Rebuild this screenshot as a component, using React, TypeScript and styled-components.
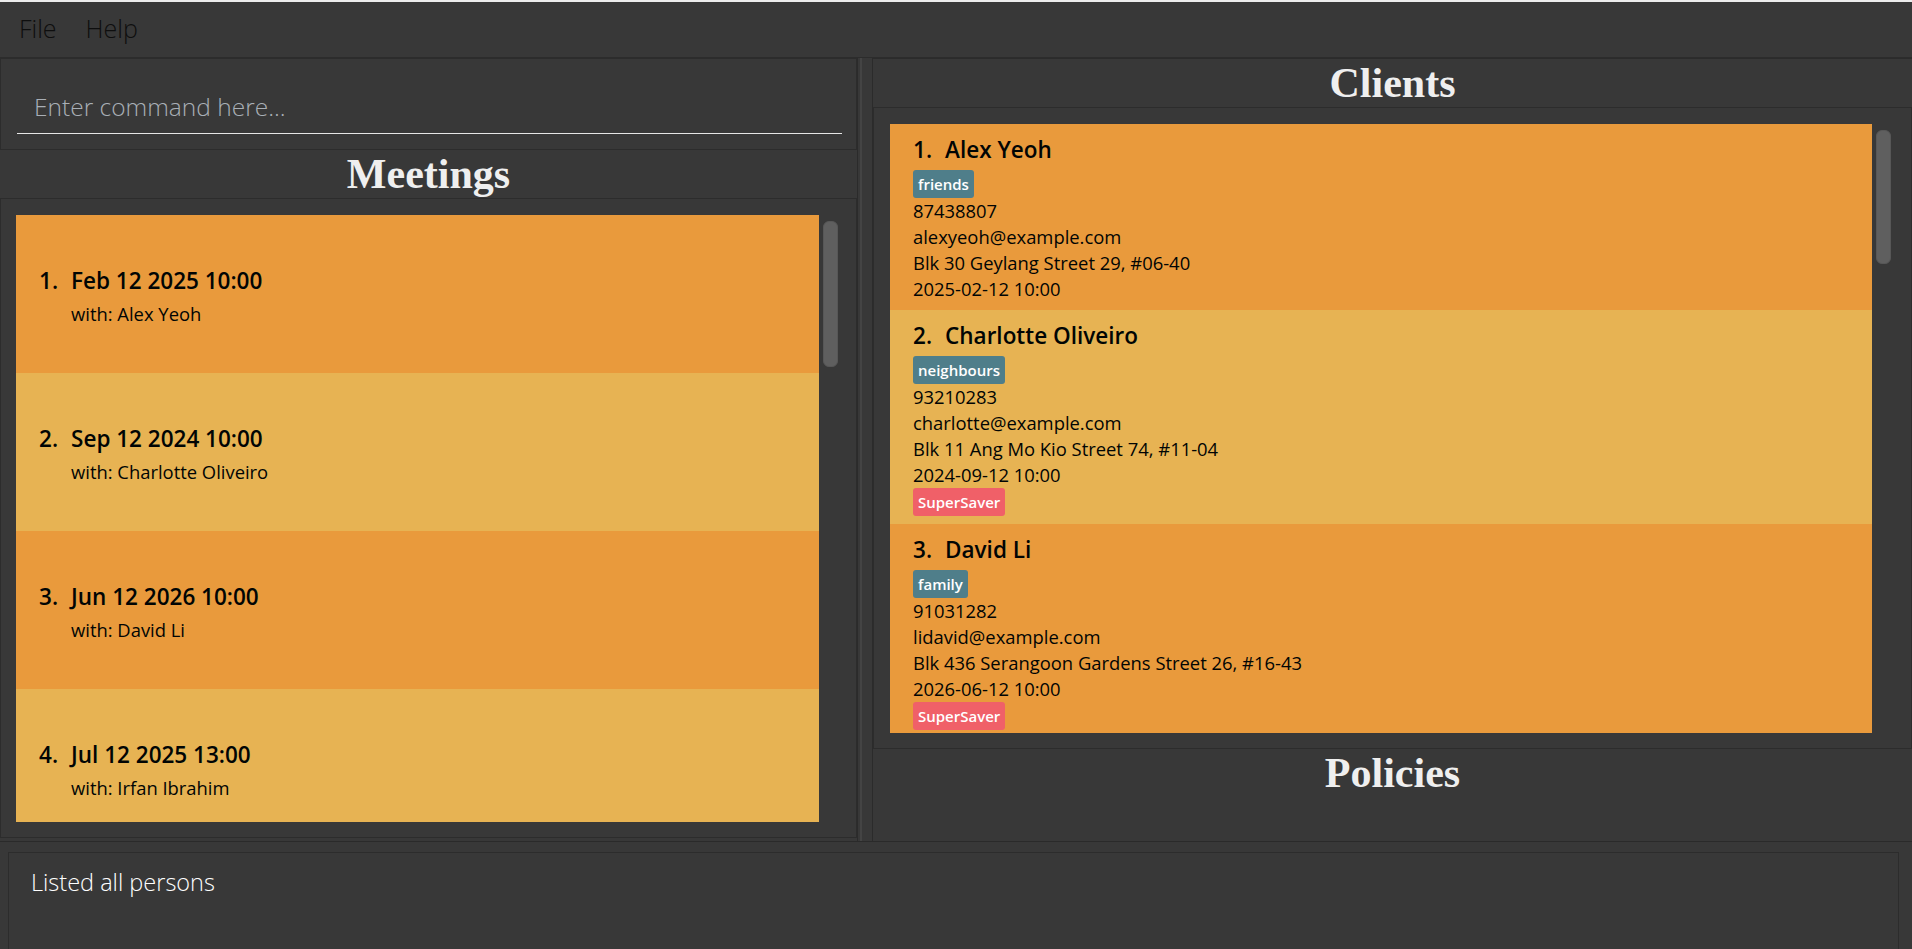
import React from "react";
import styled, { createGlobalStyle } from "styled-components";

const GlobalStyle = createGlobalStyle`
  html, body {
    margin: 0;
    padding: 0;
    background: #383838;
    overflow: hidden;
  }
  * { box-sizing: border-box; }
`;

const UI_FONT = `"Open Sans", "Noto Sans", "Liberation Sans", sans-serif`;

const Window = styled.div`
  width: 1912px;
  height: 949px;
  display: flex;
  flex-direction: column;
  background: #383838;
  border-top: 2px solid #ececec;
  overflow: hidden;
  font-family: ${UI_FONT};
`;

const MenuBar = styled.div`
  height: 56px;
  flex-shrink: 0;
  display: flex;
  align-items: flex-start;
  gap: 29px;
  padding: 10px 0 0 19px;
  border-bottom: 1px solid #2c2c2c;
`;

const MenuItem = styled.span`
  font-weight: 300;
  font-size: 25px;
  line-height: 32px;
  color: #0e0e0e;
`;

const Main = styled.div`
  height: 784px;
  flex-shrink: 0;
  display: flex;
  border-bottom: 1px solid #2a2a2a;
`;

const LeftPane = styled.div`
  width: 858px;
  flex-shrink: 0;
  display: flex;
  flex-direction: column;
  padding-bottom: 3px;
  border-right: 1px solid #2b2b2b;
`;

const Divider = styled.div`
  width: 14px;
  flex-shrink: 0;
  background: linear-gradient(
    to right,
    #383838 0,
    #383838 2px,
    #444444 2px,
    #444444 4px,
    #383838 4px
  );
`;

const RightPane = styled.div`
  flex: 1;
  display: flex;
  flex-direction: column;
  border-left: 1px solid #2b2b2b;
  border-top: 1px solid #2b2b2b;
`;

const CommandBox = styled.div`
  height: 92px;
  flex-shrink: 0;
  display: flex;
  align-items: flex-end;
  padding: 0 14px 15px 16px;
  border: 1px solid #2c2c2c;
`;

const CommandField = styled.input`
  width: 100%;
  height: 43px;
  margin: 0;
  padding: 0 0 12px 17px;
  background: transparent;
  border: none;
  border-bottom: 1px solid #e6e6e6;
  outline: none;
  font-family: ${UI_FONT};
  font-weight: 300;
  font-size: 24.5px;
  line-height: 30px;
  color: #ffffff;
  &::placeholder {
    color: #a9afb6;
  }
`;

const PanelTitle = styled.div`
  height: 48px;
  flex-shrink: 0;
  display: flex;
  justify-content: center;
  font-family: "Liberation Serif", "Times New Roman", serif;
  font-weight: 700;
  font-size: 42px;
  line-height: 48px;
  color: #efefef;
`;

const ListBox = styled.div<{ $fill?: boolean }>`
  ${(p) => (p.$fill ? "flex: 1;" : "height: 642px; flex-shrink: 0;")}
  min-height: 0;
  display: flex;
  gap: 4px;
  padding: 16px 19px 15px 16px;
  border: 1px solid #2c2c2c;
`;

const LeftListBox = styled(ListBox)`
  padding: 16px 17px 15px 15px;
`;

const Viewport = styled.div`
  flex: 1;
  min-width: 0;
  overflow: hidden;
  display: flex;
  flex-direction: column;
`;

const ScrollTrack = styled.div`
  width: 16px;
  flex-shrink: 0;
  padding-top: 6px;
`;

const ScrollThumb = styled.div<{ $length: number }>`
  width: 15px;
  height: ${(p) => p.$length}px;
  border-radius: 6px;
  background: #5f5f5f;
  border: 1px solid #575757;
`;

const toneColor = (tone: "dark" | "light") =>
  tone === "dark" ? "#e99a3c" : "#e7b353";

const MeetingCard = styled.div<{ $tone: "dark" | "light" }>`
  height: 158px;
  flex-shrink: 0;
  display: flex;
  flex-direction: column;
  justify-content: center;
  gap: 4px;
  padding: 3px 0 0 23px;
  background: ${(p) => toneColor(p.$tone)};
`;

const ClientCard = styled.div<{ $tone: "dark" | "light" }>`
  flex-shrink: 0;
  display: flex;
  flex-direction: column;
  align-items: flex-start;
  padding: 10px 23px 8px;
  background: ${(p) => toneColor(p.$tone)};
`;

const TitleRow = styled.div`
  display: flex;
  gap: 13px;
  font-weight: 600;
  font-size: 22.5px;
  line-height: 32px;
  color: #010504;
  white-space: nowrap;
`;

const SmallLabel = styled.div<{ $indent?: boolean }>`
  font-weight: 400;
  font-size: 18.4px;
  line-height: 26px;
  color: #010504;
  white-space: nowrap;
  padding-left: ${(p) => (p.$indent ? "32px" : "0")};
`;

const TagRow = styled.div<{ $gapTop?: boolean }>`
  display: flex;
  gap: 4px;
  margin-top: ${(p) => (p.$gapTop ? "4px" : "0")};
`;

const Tag = styled.span<{ $kind: "tag" | "policy" }>`
  display: inline-block;
  height: 28px;
  padding: 0 5px;
  border-radius: 3px;
  font-weight: 600;
  font-size: 15px;
  line-height: 28px;
  color: #ffffff;
  background: ${(p) => (p.$kind === "tag" ? "#4f7e8a" : "#f06068")};
`;

const PoliciesBody = styled.div`
  flex: 1;
`;

const ResultArea = styled.div`
  flex: 1;
  display: flex;
  padding: 10px 13px 0 8px;
`;

const ResultBox = styled.div`
  flex: 1;
  border: 1px solid #2c2c2c;
  border-bottom: none;
  padding: 13px 22px;
  font-weight: 300;
  font-size: 23.5px;
  line-height: 32px;
  color: #ffffff;
`;

type Tone = "dark" | "light";

const meetings = [
  { date: "Feb 12 2025 10:00", who: "Alex Yeoh" },
  { date: "Sep 12 2024 10:00", who: "Charlotte Oliveiro" },
  { date: "Jun 12 2026 10:00", who: "David Li" },
  { date: "Jul 12 2025 13:00", who: "Irfan Ibrahim" },
];

const clients = [
  {
    name: "Alex Yeoh",
    tags: ["friends"],
    phone: "87438807",
    email: "alexyeoh@example.com",
    address: "Blk 30 Geylang Street 29, #06-40",
    meeting: "2025-02-12 10:00",
    policies: [] as string[],
  },
  {
    name: "Charlotte Oliveiro",
    tags: ["neighbours"],
    phone: "93210283",
    email: "charlotte@example.com",
    address: "Blk 11 Ang Mo Kio Street 74, #11-04",
    meeting: "2024-09-12 10:00",
    policies: ["SuperSaver"],
  },
  {
    name: "David Li",
    tags: ["family"],
    phone: "91031282",
    email: "lidavid@example.com",
    address: "Blk 436 Serangoon Gardens Street 26, #16-43",
    meeting: "2026-06-12 10:00",
    policies: ["SuperSaver"],
  },
];

const toneFor = (i: number): Tone => (i % 2 === 0 ? "dark" : "light");

export default function App() {
  return (
    <>
      <GlobalStyle />
      <Window>
        <MenuBar>
          <MenuItem>File</MenuItem>
          <MenuItem>Help</MenuItem>
        </MenuBar>
        <Main>
          <LeftPane>
            <CommandBox>
              <CommandField placeholder="Enter command here..." readOnly />
            </CommandBox>
            <PanelTitle>Meetings</PanelTitle>
            <LeftListBox $fill>
              <Viewport>
                {meetings.map((m, i) => (
                  <MeetingCard key={m.date} $tone={toneFor(i)}>
                    <TitleRow>
                      <span>{i + 1}.</span>
                      <span>{m.date}</span>
                    </TitleRow>
                    <SmallLabel $indent>with: {m.who}</SmallLabel>
                  </MeetingCard>
                ))}
              </Viewport>
              <ScrollTrack>
                <ScrollThumb $length={146} />
              </ScrollTrack>
            </LeftListBox>
          </LeftPane>
          <Divider />
          <RightPane>
            <PanelTitle>Clients</PanelTitle>
            <ListBox>
              <Viewport>
                {clients.map((c, i) => (
                  <ClientCard key={c.name} $tone={toneFor(i)}>
                    <TitleRow>
                      <span>{i + 1}.</span>
                      <span>{c.name}</span>
                    </TitleRow>
                    <TagRow $gapTop>
                      {c.tags.map((t) => (
                        <Tag key={t} $kind="tag">
                          {t}
                        </Tag>
                      ))}
                    </TagRow>
                    <SmallLabel>{c.phone}</SmallLabel>
                    <SmallLabel>{c.email}</SmallLabel>
                    <SmallLabel>{c.address}</SmallLabel>
                    <SmallLabel>{c.meeting}</SmallLabel>
                    {c.policies.length > 0 && (
                      <TagRow>
                        {c.policies.map((p) => (
                          <Tag key={p} $kind="policy">
                            {p}
                          </Tag>
                        ))}
                      </TagRow>
                    )}
                  </ClientCard>
                ))}
              </Viewport>
              <ScrollTrack>
                <ScrollThumb $length={134} />
              </ScrollTrack>
            </ListBox>
            <PanelTitle>Policies</PanelTitle>
            <PoliciesBody />
          </RightPane>
        </Main>
        <ResultArea>
          <ResultBox>Listed all persons</ResultBox>
        </ResultArea>
      </Window>
    </>
  );
}
